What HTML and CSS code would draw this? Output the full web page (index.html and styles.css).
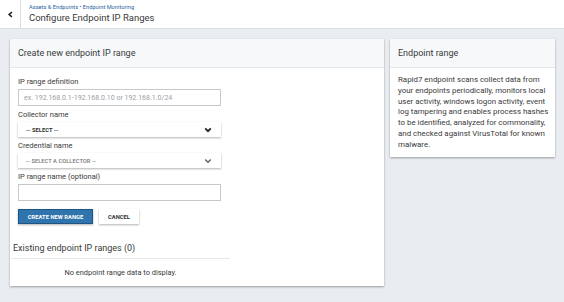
FILE: index.html
```html
<!DOCTYPE html>
<html lang="en">
<head>
    <meta charset="UTF-8">
    <title>Configure Endpoint IP Ranges</title>
    <link rel="stylesheet" href="styles.css">
</head>
<body>
    <header class="topbar">
        <button class="back-btn" aria-label="Back">
            <svg width="7" height="7" viewBox="0 0 10 10"><path d="M7 1.5 L3 5 L7 8.5" fill="none" stroke="#222" stroke-width="2.2"/></svg>
        </button>
        <div class="titles">
            <div class="crumbs"><a href="#">Assets &amp; Endpoints</a> &bull; <a href="#">Endpoint Monitoring</a></div>
            <h1>Configure Endpoint IP Ranges</h1>
        </div>
    </header>

    <main class="content">
        <section class="card main-card">
            <div class="card-head">Create new endpoint IP range</div>
            <form class="range-form">
                <label>IP range definition</label>
                <input type="text" class="field" placeholder="ex. 192.168.0.1-192.168.0.10 or 192.168.1.0/24">

                <label>Collector name</label>
                <div class="select">
                    <span>-- SELECT --</span>
                    <svg width="8" height="6" viewBox="0 0 10 7"><path d="M1.5 1.5 L5 5 L8.5 1.5" fill="none" stroke="#222" stroke-width="2.2"/></svg>
                </div>

                <label>Credential name</label>
                <div class="select disabled">
                    <span>-- SELECT A COLLECTOR --</span>
                    <svg width="8" height="6" viewBox="0 0 10 7"><path d="M1.5 1.5 L5 5 L8.5 1.5" fill="none" stroke="#666" stroke-width="1.8"/></svg>
                </div>

                <label>IP range name (optional)</label>
                <input type="text" class="field">

                <div class="actions">
                    <button type="button" class="btn primary">Create new range</button>
                    <button type="button" class="btn">Cancel</button>
                </div>
            </form>

            <div class="existing">
                <h2>Existing endpoint IP ranges (0)</h2>
                <p class="empty">No endpoint range data to display.</p>
            </div>
        </section>

        <aside class="card side-card">
            <div class="card-head">Endpoint range</div>
            <p class="side-text">Rapid7 endpoint scans collect data from your endpoints periodically, monitors local user activity, windows logon activity, event log tampering and enables process hashes to be identified, analyzed for commonality, and checked against VirusTotal for known malware.</p>
        </aside>
    </main>
</body>
</html>
```

FILE: styles.css
```css
body {
    margin: 0;
    font-family: Roboto, "Liberation Sans", sans-serif;
    background: #e9edf1;
    color: #3a3a3a;
    height: 302px;
}

/* barre du haut */
.topbar {
    display: flex;
    height: 28px;
    background: #fff;
    border-bottom: 1px solid #d9dee3;
}
.back-btn {
    width: 21px;
    border: none;
    border-right: 1px solid #d9dee3;
    background: #fff;
    padding: 0;
    display: flex;
    align-items: center;
    justify-content: center;
}
.titles {
    padding: 4px 0 0 8px;
}
.crumbs {
    font-size: 5.7px;
    line-height: 7px;
    color: #2a64a3;
}
.crumbs a {
    color: #2a64a3;
    text-decoration: none;
}
h1 {
    margin: 1px 0 0;
    font-size: 9.5px;
    font-weight: 400;
    color: #3a3a3a;
    line-height: 12px;
}

/* contenu */
.content {
    display: flex;
    align-items: flex-start;
    gap: 6px;
    padding: 10px 0 0 10px;
}
.card {
    background: #fff;
    box-shadow: 0 1px 2px rgba(0, 0, 0, 0.35);
}
.card-head {
    height: 28px;
    line-height: 28px;
    padding: 0 8px;
    background: #f6f8fa;
    border-bottom: 1px solid #e3e7eb;
    font-size: 9px;
    color: #3a3a3a;
}
.main-card {
    width: 374px;
    height: 247px;
}
.side-card {
    width: 165px;
    height: 118px;
}

/* formulaire */
.range-form {
    padding: 5px 8px 0;
    display: flex;
    flex-direction: column;
    align-items: flex-start;
}
.range-form label {
    font-size: 7.5px;
    line-height: 10px;
    margin-top: 4px;
    color: #3a3a3a;
}
.field {
    box-sizing: border-box;
    width: 203px;
    height: 17px;
    border: 1px solid #c4c9ce;
    margin: 2px 0 0;
    padding: 0 5px;
    font-family: inherit;
    font-size: 7px;
}
.field::placeholder {
    color: #9aa0a6;
}
.select {
    box-sizing: border-box;
    width: 203px;
    height: 15px;
    margin: 2px 0 0;
    padding: 0 9px 0 8px;
    display: flex;
    align-items: center;
    justify-content: space-between;
    background: #fff;
    box-shadow: 0 1px 2px rgba(0, 0, 0, 0.3);
    font-size: 5.8px;
    font-weight: 700;
    color: #333;
}
.select.disabled {
    font-weight: 500;
    color: #777;
}
.actions {
    display: flex;
    gap: 6px;
    margin-top: 8px;
}
.btn {
    height: 15px;
    padding: 0 9px;
    border: none;
    background: #fff;
    box-shadow: 0 1px 2px rgba(0, 0, 0, 0.3);
    font-family: inherit;
    font-size: 5.8px;
    font-weight: 700;
    text-transform: uppercase;
    white-space: nowrap;
    color: #333;
}
.btn.primary {
    width: 75px;
    padding: 0;
    background: #2f74ad;
    border: 1px solid #1d5584;
    color: #fff;
}

/* liste existante */
.existing {
    width: 219px;
    margin: 19px 0 0 1px;
}
.existing h2 {
    margin: 0;
    padding: 0 2px 5px;
    font-size: 9px;
    font-weight: 400;
    color: #3a3a3a;
    border-bottom: 1px solid #e6e9ec;
}
.empty {
    margin: 9px 0 0;
    text-align: center;
    font-size: 7.4px;
    color: #3a3a3a;
}

/* encadré latéral */
.side-text {
    margin: 0;
    padding: 7px 3px 6px 8px;
    font-size: 7.9px;
    line-height: 10.8px;
    color: #3a3a3a;
}
```
